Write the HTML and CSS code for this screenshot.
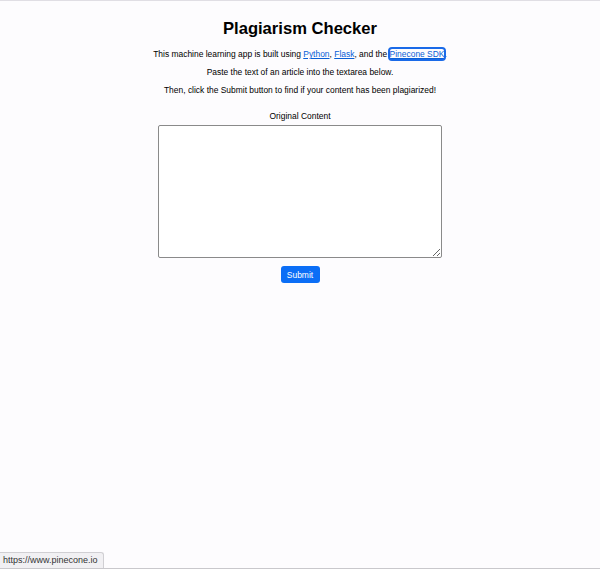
FILE: index.html
```html
<!DOCTYPE html>
<html>
<head>
<meta charset="utf-8">
<link rel="stylesheet" href="styles.css">
</head>
<body>
<main class="page">
  <h1 class="title">Plagiarism Checker</h1>
  <p class="line">This machine learning app is built using <a href="#">Python</a>, <a href="#">Flask</a>, and the <a href="#" class="focused">Pinecone SDK</a>.</p>
  <p class="line">Paste the text of an article into the textarea below.</p>
  <p class="line">Then, click the Submit button to find if your content has been plagiarized!</p>
  <form class="form">
    <label class="label" for="content">Original Content</label>
    <textarea id="content" class="area"></textarea>
    <button type="button" class="submit">Submit</button>
  </form>
</main>
<div class="status">https://www.pinecone.io</div>
</body>
</html>
```
FILE: styles.css
```css
html, body {
  margin: 0;
  height: 100%;
}
body {
  box-sizing: border-box;
  background: #fdfcfe;
  font-family: "Liberation Sans", Arial, sans-serif;
  color: #000;
  position: relative;
  overflow: hidden;
  border-top: 1px solid #e0dee4;
  border-bottom: 1px solid #c9c8cc;
}
.page {
  text-align: center;
  padding-top: 18px;
}
.title {
  font-size: 16.6px;
  line-height: 20px;
  margin: 0 0 10px;
  font-weight: bold;
}
.line {
  font-size: 8.45px;
  line-height: 10px;
  margin: 0 0 8px;
}
.line a {
  color: #0a5fd6;
  text-decoration: underline;
}
.line a.focused {
  outline: 2px solid #1a6ae8;
  outline-offset: 0;
  border-radius: 2px;
}
.form {
  display: flex;
  flex-direction: column;
  align-items: center;
  padding-top: 8px;
}
.label {
  font-size: 8.45px;
  line-height: 10px;
  margin-bottom: 4px;
}
.area {
  box-sizing: border-box;
  width: 284px;
  height: 133px;
  border: 1px solid #8a8a8a;
  border-radius: 2px;
  background: #fff;
  resize: both;
  margin: 0 0 8px;
}
.submit {
  box-sizing: border-box;
  width: 39px;
  height: 17px;
  padding: 0;
  border: none;
  border-radius: 3px;
  background: #0b6ef6;
  color: #fff;
  font-family: "Liberation Sans", Arial, sans-serif;
  font-size: 8.45px;
}
.status {
  position: absolute;
  left: 0;
  bottom: 0;
  height: 15px;
  line-height: 15px;
  padding: 0 5px 0 3px;
  font-size: 9px;
  color: #333;
  background: #f1f0f3;
  border: 1px solid #d0cfd3;
  border-left: none;
  border-bottom: none;
  border-top-right-radius: 3px;
}
```
